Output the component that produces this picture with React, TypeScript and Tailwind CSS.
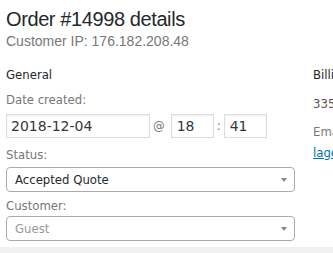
export default function App() {
  const field =
    "h-[24px] border border-[#ddd] text-[#32373c] shadow-[inset_0_1px_2px_rgba(0,0,0,0.07)] outline-none font-['DejaVu_Sans',sans-serif] text-[14px]";

  return (
    <div className="w-[333px] h-[253px] overflow-hidden bg-[#f1f1f1]">
      <div className="bg-white h-[247px] overflow-hidden pl-[6px] pt-[6px]">
        <h2 className="font-['Liberation_Sans',sans-serif] text-[20px] tracking-[-0.4px] leading-[26px] text-[#23282d]">
          Order #14998 details
        </h2>
        <p className="font-['Liberation_Sans',sans-serif] text-[14px] leading-[18px] text-[#777]">
          Customer IP: 176.182.208.48
        </p>
        <div className="flex mt-[16px] font-['DejaVu_Sans_Condensed','DejaVu_Sans',sans-serif]">
          <div className="w-[289px] shrink-0">
            <h3 className="text-[13px] leading-[18px] text-[#23282d]">General</h3>
            <div className="mt-[8px] text-[13px] leading-[16px] text-[#777]">Date created:</div>
            <div className="flex items-center mt-[6px] text-[13px]">
              <input readOnly value="2018-12-04" className={`w-[144px] px-[4px] ${field}`} />
              <span className="mx-[3px] text-[#777]">@</span>
              <input readOnly value="18" className={`w-[43px] ml-[3px] px-[5px] ${field}`} />
              <span className="ml-[3px] mr-[3px] text-[#777]">:</span>
              <input readOnly value="41" className={`w-[43px] px-[5px] ${field}`} />
            </div>
            <div className="mt-[9px] text-[13px] leading-[16px] text-[#777]">Status:</div>
            <div className="mt-[4px] h-[25px] border border-[#aaa] rounded-[4px] flex items-center justify-between pl-[8px] pr-[7px] text-[13px] text-[#23282d]">
              <span>Accepted Quote</span>
              <span className="w-0 h-0 border-x-[3px] border-x-transparent border-t-[4px] border-t-[#888]" />
            </div>
            <div className="mt-[6px] text-[13px] leading-[16px] text-[#777]">Customer:</div>
            <div className="mt-[2px] h-[25px] border border-[#aaa] rounded-[4px] flex items-center justify-between pl-[8px] pr-[7px] text-[13px] text-[#999]">
              <span>Guest</span>
              <span className="w-0 h-0 border-x-[3px] border-x-transparent border-t-[4px] border-t-[#888]" />
            </div>
          </div>
          <div className="ml-[18px] shrink-0 w-[120px]">
            <h3 className="text-[13px] leading-[18px] text-[#23282d]">Billing</h3>
            <div className="mt-[12px] text-[13px] leading-[16px] text-[#555]">3359 Main St</div>
            <div className="mt-[12px] text-[13px] leading-[16px] text-[#777]">Email address:</div>
            <a className="text-[13px] leading-[16px] text-[#0073aa] underline">lagerboy@example.com</a>
          </div>
        </div>
      </div>
    </div>
  );
}
